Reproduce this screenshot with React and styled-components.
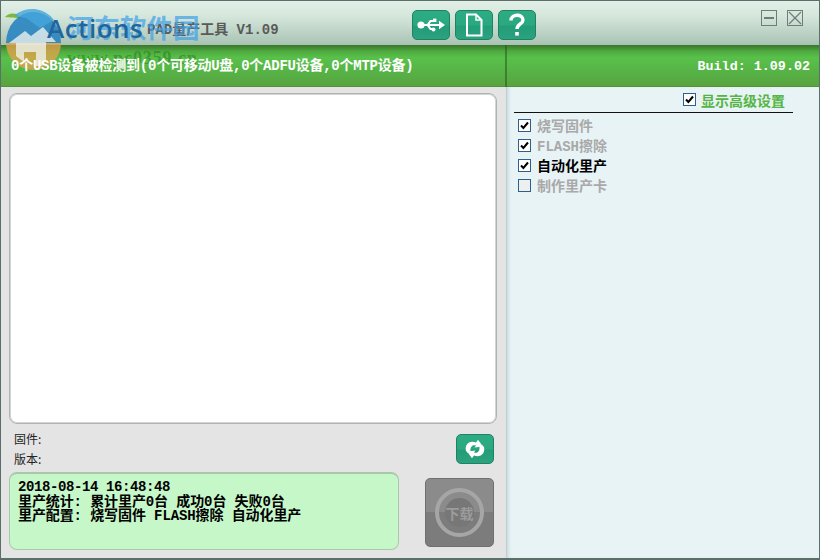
import React from "react";
import styled, { createGlobalStyle } from "styled-components";

const Global = createGlobalStyle`
  html, body { margin: 0; padding: 0; background: #fff; }
  * { box-sizing: border-box; }
`;
const BITMAP = `"Liberation Mono", "Noto Sans CJK SC", monospace`;
const Win = styled.div`
  position: relative; width: 820px; height: 560px; display: flex; flex-direction: column;
  border: 1px solid #5c706a; border-bottom-width: 2px; overflow: hidden;
  font-family: ${BITMAP};
`;
const TitleBar = styled.header`
  height: 44px; flex: none; display: flex; align-items: flex-start;
  background: linear-gradient(#e2f0e7, #d5e6db 35%, #a8c3b3);
  padding: 9px 16px 0 146px;
`;
const Title = styled.div`
  width: 265px; padding-top: 12px; font-size: 14px; line-height: 16px; font-weight: 700; color: #5a5a5a; white-space: nowrap;
`;
const Tools = styled.div` display: flex; gap: 5px; flex: 1; `;
const ToolButton = styled.button`
  width: 38px; height: 30px; padding: 0; display: flex; align-items: center; justify-content: center;
  border: 1px solid #1f8262; border-radius: 5px;
  background: linear-gradient(#2dab82, #2aa880 50%, #239c78 54%, #2ca27f);
  color: #fff;
`;
const WinControls = styled.div` display: flex; gap: 10px; `;
const WinControl = styled.div`
  width: 16px; height: 16px; border: 1px solid #6f7c7a; display: flex; align-items: center; justify-content: center;
`;
const StatusBar = styled.div`
  height: 42px; flex: none; display: grid; grid-template-columns: 506px 1fr; align-items: stretch;
  background: linear-gradient(#39752a, #4fa93f 15%, #58c14a 30%, #56b045 70%, #5aa340 98%, #43802e);
  color: #fff; font-size: 14px; font-weight: 700; line-height: 16px;
`;
const StatusLeft = styled.div`
  position: relative; z-index: 2;
  padding: 13px 0 0 10px; white-space: nowrap; letter-spacing: -0.25px;
  border-right: 2px solid rgba(40, 90, 30, .55);
`;
const StatusRight = styled.div`
  display: flex; justify-content: flex-end; padding: 14px 9px 0 0; font-size: 13.4px; white-space: nowrap;
`;
const Body = styled.main`
  flex: 1; display: grid; grid-template-columns: 505px 1fr; min-height: 0;
`;
const Left = styled.section`
  background: #e4e4e4; padding: 6px 9px 8px 8px; display: flex; flex-direction: column;
`;
const ListBox = styled.div`
  height: 331px; flex: none; background: #fff; border: 1px solid #aeb4b2; border-radius: 8px;
  box-shadow: 0 0 0 1px #d4d4d4 inset;
`;
const FirmwareRow = styled.div`
  height: 48px; flex: none; display: flex; justify-content: space-between; padding: 7px 3px 0 5px;
`;
const Labels = styled.div`
  display: flex; flex-direction: column; gap: 4px; font: 12px/16px "Noto Sans CJK SC", sans-serif; color: #222;
`;
const RefreshButton = styled(ToolButton)`
  height: 30px; margin-top: 3px;
`;
const BottomRow = styled.div` display: flex; justify-content: space-between; padding-right: 3px; `;
const LogBox = styled.div`
  width: 390px; height: 78px; background: #c6f7c9; border: 1px solid #a9c8aa; border-top: 2px solid #a9c8aa;
  border-radius: 8px; padding: 6px 8px; font-size: 14px; line-height: 14.6px; font-weight: 700; color: #000;
  white-space: pre; letter-spacing: -0.1px;
`;
const DateLine = styled.div` letter-spacing: -0.4px; `;
const DownloadButton = styled.div`
  width: 69px; height: 69px; margin-top: 6px; border-radius: 5px; border: 1px solid #707070;
  background: linear-gradient(#8b8b8b 50%, #7c7c7c 50%); display: flex; align-items: center; justify-content: center;
`;
const Ring = styled.div`
  width: 49px; height: 49px; border-radius: 50%; border: 4px solid #a6a6a6;
  display: flex; align-items: center; justify-content: center; 
`;
const Disc = styled.div`
  width: 29px; height: 29px; border-radius: 50%; background: #777; color: #9c9c9c; display: flex; align-items: center; justify-content: center;
  font: 700 14px/1 "Noto Sans CJK SC", sans-serif; white-space: nowrap;
`;
const Right = styled.aside`
  background: #e8f3f6; padding: 0 26px 0 7px; box-shadow: 3px 0 3px -1px #cfdde0 inset;
  border-left: 1px solid #b9d0d4;
`;
const AdvancedRow = styled.div`
  height: 26px; display: flex; justify-content: flex-end; align-items: center; gap: 5px; padding: 1px 8px 1px 0;
  border-bottom: 1px solid #111; font-size: 14px; font-weight: 700; color: #55b544;
`;
const Options = styled.div` display: flex; flex-direction: column; padding: 2px 0 0 4px; `;
const Option = styled.div`
  height: 20px; display: flex; align-items: center; gap: 6px; font-size: 14px; font-weight: 700;
  color: ${p => (p.$on ? "#000" : "#a9a9a9")}; white-space: nowrap;
`;
const Box = styled.span`
  width: 13px; height: 13px; flex: none; background: ${p => (p.$checked ? "#fff" : "#eef0f0")};
  border: 1px solid #2f5f8c; display: flex; align-items: center; justify-content: center;
`;
const WatermarkLayer = styled.div`
  position: absolute; z-index: 1; left: -1px; top: -1px; width: 215px; height: 72px; pointer-events: none;
`;
const Logo = styled.svg` position: absolute; left: 0; top: 0; `;
const ActionsText = styled.span`
  position: absolute; left: 47px; top: 13px; font: 600 26px/30px "Open Sans", sans-serif; letter-spacing: .5px; color: #1f669c;
`;
const CnMark = styled.span`
  position: absolute; left: 67px; top: 11px; font: 700 26.5px/32px "Noto Sans CJK SC", sans-serif; color: rgba(60, 160, 235, .7); white-space: nowrap;
`;
const UrlMark = styled.span`
  position: absolute; left: 67px; top: 49px; font: 700 18px/18px "Liberation Serif", serif; letter-spacing: .9px; color: rgba(40, 125, 30, .55); white-space: nowrap;
`;

const Check = () => (
  <svg width="9" height="9" viewBox="0 0 9 9"><path d="M1 4.500 L3.400 7 L8 1.500" fill="none" stroke="#000" strokeWidth="2" /></svg>
);
const CheckBox = ({ checked }) => <Box $checked={checked}>{checked && <Check />}</Box>;

const UsbIcon = () => (
  <svg width="28" height="16" viewBox="0 0 28 16" fill="#fff">
    <circle cx="4" cy="8" r="3.600" />
    <rect x="6" y="7" width="18" height="2" />
    <path d="M22 3.800 L28 8 L22 12.200 Z" />
    <path d="M10 7 L13 3 H17 V5 H14 L12 8 Z" />
    <path d="M10 9 L13 13 H15 V11 H14 L12 8 Z" />
    <rect x="16" y="1.600" width="3.400" height="3.400" />
    <circle cx="16.500" cy="12.400" r="2" />
  </svg>
);
const FileIcon = () => (
  <svg width="18" height="24" viewBox="0 0 18 24" fill="none" stroke="#fff" strokeWidth="2">
    <path d="M2 1.500 H11 L16.500 7 V22.500 H2 Z" />
    <path d="M11 1.500 V7 H16.500" strokeWidth="1.500" />
  </svg>
);
const RefreshIcon = () => (
  <svg width="22" height="20" viewBox="0 0 22 20" fill="#fff">
    <path d="M2 12 C0.500 6 5 1 12 3.500 L14 0.800 L19 7.500 L10.500 8.500 L12 6.500 C9 5.500 6 7.500 6.500 12 L4 14 Z" />
    <path d="M20 8 C21.500 14 17 19 10 16.500 L8 19.200 L3 12.500 L11.500 11.500 L10 13.500 C13 14.500 16 12.500 15.500 8 L18 6 Z" />
  </svg>
);

export default function App() {
  return (
    <>
      <Global />
      <Win>
        <TitleBar>
          <Title>PAD量产工具 V1.09</Title>
          <Tools>
            <ToolButton aria-label="usb"><UsbIcon /></ToolButton>
            <ToolButton aria-label="file"><FileIcon /></ToolButton>
            <ToolButton aria-label="help">
              <svg width="16" height="24" viewBox="0 0 16 24" fill="none" stroke="#fff" strokeWidth="3.400">
                <path d="M2 7.500 C2 .5 14 .5 14 7 C14 11 8 11 8 16" />
                <rect x="6.200" y="19" width="3.600" height="3.600" fill="#fff" stroke="none" />
              </svg>
            </ToolButton>
          </Tools>
          <WinControls>
            <WinControl>
              <svg width="12" height="12" viewBox="0 0 12 12"><rect x="1" y="5" width="10" height="2" fill="#6f7c7a" /></svg>
            </WinControl>
            <WinControl>
              <svg width="14" height="14" viewBox="0 0 14 14"><path d="M1 1 L13 13 M13 1 L1 13" stroke="#6f7c7a" strokeWidth="1.200" /></svg>
            </WinControl>
          </WinControls>
        </TitleBar>
        <StatusBar>
          <StatusLeft>0个USB设备被检测到(0个可移动U盘,0个ADFU设备,0个MTP设备)</StatusLeft>
          <StatusRight>Build: 1.09.02</StatusRight>
        </StatusBar>
        <Body>
          <Left>
            <ListBox />
            <FirmwareRow>
              <Labels>
                <span>固件:</span>
                <span>版本:</span>
              </Labels>
              <RefreshButton aria-label="refresh"><RefreshIcon /></RefreshButton>
            </FirmwareRow>
            <BottomRow>
              <LogBox>
                <DateLine>2018-08-14 16:48:48</DateLine>
                {"里产统计: 累计里产0台 成功0台 失败0台\n里产配置: 烧写固件 FLASH擦除 自动化里产"}
              </LogBox>
              <DownloadButton>
                <Ring><Disc>下载</Disc></Ring>
              </DownloadButton>
            </BottomRow>
          </Left>
          <Right>
            <AdvancedRow><CheckBox checked />显示高级设置</AdvancedRow>
            <Options>
              <Option><CheckBox checked />烧写固件</Option>
              <Option><CheckBox checked />FLASH擦除</Option>
              <Option $on><CheckBox checked />自动化里产</Option>
              <Option><CheckBox />制作里产卡</Option>
            </Options>
          </Right>
        </Body>
        <WatermarkLayer>
          <Logo width="70" height="72" viewBox="0 0 70 72">
            <path d="M5 17 C9 12 18 12 22 19 C15 17 10 18 5 17 Z" fill="#7cb93a" />
            <path d="M6 43 A27.500 31 0 0 1 61 43 Z" fill="#2b86c0" opacity=".92" />
            <path d="M6 43 A27.500 27 0 0 0 61 43 Z" fill="#dfa24c" opacity=".8" />
            <path d="M14 16 A27 27 0 0 1 54 20 L40 28 L26 18 Z" fill="#45a6dc" opacity=".8" />
            <path d="M9 43 L25 31 L31 36 L43 27 L56 42 L46 42 V60 L42 66 H36 V52 H24 V62 L16 56 V43 Z" fill="#eef3f0" opacity=".78" />
          </Logo>
          <CnMark>河东软件园</CnMark>
          <ActionsText>Actions</ActionsText>
          <UrlMark>www.pc0359.cn</UrlMark>
        </WatermarkLayer>
      </Win>
    </>
  );
}
